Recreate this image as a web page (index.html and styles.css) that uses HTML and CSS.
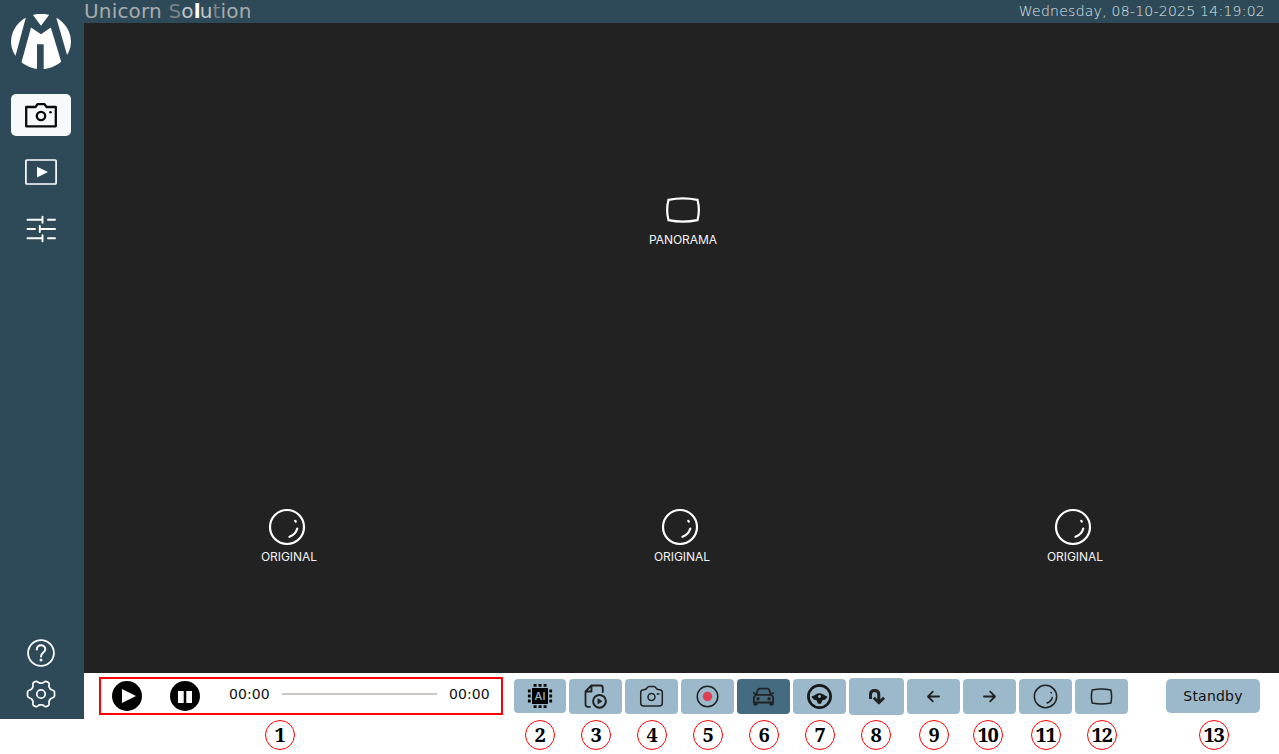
FILE: index.html
```html
<!DOCTYPE html>
<html lang="en">
<head>
<meta charset="utf-8">
<title>Unicorn Solution</title>
<link rel="stylesheet" href="styles.css">
</head>
<body>
<svg class="defs" width="0" height="0" aria-hidden="true">
  <symbol id="lens" viewBox="0 0 38 38">
    <circle cx="19" cy="19" r="17"/>
    <path d="M29.3 20.5Q27.6 26.6 21.5 28.8"/>
    <path d="M27.3 12.8l.5.8"/>
  </symbol>
  <symbol id="pano" viewBox="0 0 36 28">
    <path d="M3.500 3.800Q18 .8 32.500 3.800Q35.200 14 32.500 24.200Q18 27.200 3.500 24.200Q.8 14 3.500 3.800Z"/>
  </symbol>
</svg>
<div class="app">
  <aside class="sidebar">
    <svg class="logo" viewBox="11 14 60 55">
      <clipPath id="disc"><ellipse cx="41" cy="41.500" rx="30" ry="27.700"/></clipPath>
      <g clip-path="url(#disc)" fill="#fff">
        <path d="M31.500 13H50.500L41 25.700Z"/>
        <path d="M11 14H26.800L15.600 55.500L11 58Z"/>
        <path d="M71 14H55.200L67.200 55.500L71 58Z"/>
        <path d="M31 27.500L41 34.300L50.800 27.500L61.300 62V70H43.700V44.300H37V70H21.300V63Z"/>
      </g>
    </svg>
    <a class="nav active">
      <svg width="34" height="28" viewBox="0 0 34 28" fill="none" stroke="#0b0b0b" stroke-width="2.300" stroke-linejoin="round"><path d="M2.200 6H11.500L13.500 3.200H20.500L22.500 6H31.800V25.300H2.200Z"/><circle cx="17" cy="15" r="4.200"/><circle cx="26.500" cy="11.300" r="1.300" fill="#0b0b0b" stroke="none"/></svg>
    </a>
    <a class="nav">
      <svg width="34" height="28" viewBox="0 0 34 28" fill="none" stroke="#fff" stroke-width="1.700"><rect x="1.900" y="2" width="30.200" height="24" rx="1"/><path d="M13 8.800L24 14L13 19.500Z" fill="#fff" stroke="none"/></svg>
    </a>
    <a class="nav">
      <svg width="34" height="28" viewBox="0 0 34 28" fill="none" stroke="#fff" stroke-width="1.900" stroke-linecap="round"><path d="M3.500 4.700H18.500M24 4.700H31M18.500 1.700V7.700M3.500 14H11M16 14H31M15.800 11V17M3.500 23.300H18.500M24 23.300H31M18.500 20.300V26.300"/></svg>
    </a>
    <div class="sidebar-foot">
      <svg width="30" height="30" viewBox="0 0 30 30" fill="none" stroke="#fff" stroke-width="1.800" stroke-linecap="round"><circle cx="15" cy="15" r="12.900"/><path d="M10.800 11.500C10.800 5.700 19.300 5.900 19.300 11.300C19.300 14.600 15 14.600 15 18.500" stroke-width="2"/><circle cx="15" cy="22" r="1.500" fill="#fff" stroke="none"/></svg>
      <svg width="30" height="30" viewBox="0 0 30 30" fill="none" stroke="#fff" stroke-width="1.700" stroke-linejoin="round"><circle cx="15" cy="15" r="4.200"/><path d="M9.500 2.500C11 1.500 12.200 3.900 13.700 4.200H16.300C17.800 3.900 19 1.500 20.500 2.500L22.500 3.600C24 4.500 22.500 6.500 23.100 8L24.300 10C25.300 11.300 28.500 11 28.500 13V17C28.500 19 25.300 18.700 24.300 20L23.100 22C22.500 23.500 24 25.500 22.500 26.400L20.500 27.500C19 28.500 17.800 26.100 16.300 25.800H13.700C12.200 26.100 11 28.500 9.500 27.500L7.500 26.400C6 25.500 7.500 23.500 6.900 22L5.700 20C4.700 18.700 1.500 19 1.500 17V13C1.500 11 4.700 11.300 5.700 10L6.900 8C7.500 6.500 6 4.500 7.500 3.600Z"/></svg>
    </div>
  </aside>
  <main class="main">
    <header class="header">
      <h1 class="title">Unicorn <span class="s1">S</span><span class="s2">o</span><span class="s3">l</span><span class="s2">u</span><span class="s1">t</span>ion</h1>
      <time class="clock">Wednesday, 08-10-2025 14:19:02</time>
    </header>
    <section class="stage">
      <div class="view view-pano"><svg class="pano-icon"><use href="#pano"/></svg><span>PANORAMA</span></div>
      <div class="view"><svg class="lens-icon"><use href="#lens"/></svg><span>ORIGINAL</span></div>
      <div class="view"><svg class="lens-icon"><use href="#lens"/></svg><span>ORIGINAL</span></div>
      <div class="view"><svg class="lens-icon"><use href="#lens"/></svg><span>ORIGINAL</span></div>
    </section>
    <div class="toolbar">
      <div class="player">
        <svg class="play" viewBox="0 0 30 30"><circle cx="15" cy="15" r="15"/><path d="M10 8L24 15L10 22Z" fill="#fff"/></svg>
        <svg class="pause" viewBox="0 0 30 30"><circle cx="15" cy="15" r="15"/><path d="M8 10H13.700V22H8ZM16.300 10H22V22H16.300Z" fill="#fff"/></svg>
        <span class="time">00:00</span><span class="track"></span><span class="time">00:00</span>
      </div>
      <button class="btn btn-ai"><svg viewBox="0 0 26 26"><path d="M5 5H21V21H5Z"/><path d="M6.600 2.300H20M6.600 23.700H20" stroke="#050505" stroke-width="2.800" stroke-dasharray="3 2"/><path d="M2.300 6.600V20M23.700 6.600V20" stroke="#050505" stroke-width="2.800" stroke-dasharray="3 2"/><text x="13" y="17" text-anchor="middle" class="ai">AI</text></svg></button>
      <button class="btn"><svg class="line" viewBox="-.5 -.5 27 27"><path d="M7.500 23.300H5.500Q3 23.300 3 20.800V8L8.800 2H18Q20.300 2 20.300 4.500V8.500M9 2.500V8H3.500"/><circle cx="17" cy="17.800" r="6.400" stroke-width="2"/><path d="M15 14.500L20 17.800L15 21Z" fill="#222" stroke="none"/></svg></button>
      <button class="btn"><svg class="line thin" viewBox="-.5 -.5 27 27"><path d="M2.200 9Q2.200 6.200 5.200 6.200Q7.700 6.200 8.400 4.600Q9.200 3 11 3H15Q16.800 3 17.600 4.600Q18.300 6.200 20.800 6.200Q23.800 6.200 23.800 9V19.500Q23.800 22.500 20.800 22.500H5.200Q2.200 22.500 2.200 19.500Z"/><circle cx="13" cy="13.500" r="3.500"/><path d="M18.700 10.500H20.500"/></svg></button>
      <button class="btn"><svg class="line thin" viewBox="-.5 -.5 27 27"><circle cx="13" cy="13" r="10.300"/><circle cx="13" cy="13" r="4.700" fill="#e03e52" stroke="none"/></svg></button>
      <button class="btn selected"><svg class="line" viewBox="-.5 -.5 27 27"><path d="M5.500 11.300L7.500 6.200Q7.900 5.200 9 5.200H17Q18.100 5.200 18.500 6.200L20.500 11.300M5.500 11.300H20.500L22.600 13.500V19H3.400V13.500ZM3.700 19V21H6.300V19M19.700 19V21H22.300V19M3.300 9.500L5 10.500M22.700 9.500L21 10.500"/><circle cx="7.500" cy="15.200" r=".8"/><circle cx="18.500" cy="15.200" r=".8"/></svg></button>
      <button class="btn"><svg viewBox="-.5 -.5 27 27"><circle cx="13" cy="13" r="11.100" fill="none" stroke="#181818" stroke-width="2.700"/><path d="M5 13Q8 12 9.500 10.800Q13 8.600 16.500 10.800Q18 12 21 13Q19.500 16.500 16 16.800L14.500 20.300H11.500L10 16.800Q6.500 16.500 5 13Z" fill="#181818"/><circle cx="13" cy="13" r="1.400" fill="#9cb9cb"/></svg></button>
      <button class="btn btn-turn"><svg viewBox="-.5 -.5 27 27" fill="none" stroke="#222" stroke-width="3"><path d="M7 15.600V11Q7 7 11 7Q15.300 7 15.300 11V18.500"/><path d="M10.300 14.200L15.400 19.200L20.500 14.200"/></svg></button>
      <button class="btn"><svg class="line arrow" viewBox="-.5 -.5 27 27"><path d="M18.500 13H7.500M12.300 8.200L7.500 13L12.300 17.800"/></svg></button>
      <button class="btn"><svg class="line arrow" viewBox="-.5 -.5 27 27"><path d="M7.500 13H18.500M13.700 8.200L18.500 13L13.700 17.800"/></svg></button>
      <button class="btn"><svg class="mini-lens"><use href="#lens"/></svg></button>
      <button class="btn"><svg class="mini-pano"><use href="#pano"/></svg></button>
      <button class="standby">Standby</button>
    </div>
  </main>
  <ol class="legend">
    <li>1</li><li>2</li><li>3</li><li>4</li><li>5</li><li>6</li><li>7</li><li>8</li><li class="nine">9</li><li class="ten">10</li><li class="eleven">11</li><li>12</li><li class="last">13</li>
  </ol>
</div>
</body>
</html>
```
FILE: styles.css
```css
* { box-sizing: border-box; }
body { margin: 0; background: #fff; overflow: hidden; }
button { border: 0; padding: 0; margin: 0; }
svg { display: block; flex: none; }
.defs { display: none; }
.app { width: 1279px; height: 754px; display: grid; grid-template: 719px 35px / 84px 1195px; }

.sidebar { background: #2e4a59; padding: 14px 0 10px 11px; display: flex; flex-direction: column; }
.logo { width: 60px; height: 55px; }
.nav { width: 60px; height: 42px; margin-top: 15px; border-radius: 5px; display: flex; align-items: center; justify-content: center; }
.nav.active { background: #f8f9fb; margin-top: 25px; }
.sidebar-foot { margin-top: auto; width: 60px; display: flex; flex-direction: column; align-items: center; gap: 11px; }

.main { display: grid; grid-template-rows: 23px 650px 46px; }
.header { background: #2e4a59; display: flex; justify-content: space-between; align-items: flex-start; padding-right: 14px; font-family: "DejaVu Sans", sans-serif; }
.title { margin: 0; font-size: 20px; line-height: 23px; font-weight: 400; letter-spacing: .18px; color: #a9abac; }
.s1 { color: #7f8285; }
.s2 { color: #c3c6c8; }
.s3 { color: #fff; font-weight: 700; letter-spacing: -1px; }
.clock { font-family: "DejaVu Sans Light", "DejaVu Sans", sans-serif; font-weight: 200; font-size: 14px; line-height: 22px; letter-spacing: .25px; color: #dfe5e8; }

.stage { background: #222; padding: 0 9.500px 0 6.500px; display: grid; grid-template: 485px 1fr / repeat(3, 393px); }
.view { display: flex; flex-direction: column; align-items: center; color: #f4f4f4; font: 400 12px/16px Inter, sans-serif; letter-spacing: -.05px; }
.view span { padding-left: 4px; }
.view-pano { grid-column: 1 / -1; padding: 173px 0 0 6px; gap: 8px; }
.view-pano span { padding-left: 0; }
.pano-icon { width: 36px; height: 28px; fill: none; stroke: #fff; stroke-width: 2.200; }
.lens-icon { width: 38px; height: 38px; margin-bottom: 3px; fill: none; stroke: #fff; stroke-width: 2.200; stroke-linecap: round; }

.toolbar { background: #fff; display: flex; align-items: flex-start; padding: 4px 0 0 15px; gap: 3px; }
.player { width: 404px; height: 38px; margin-right: 8px; border: 2px solid #f00; display: flex; align-items: center; padding: 0 11px; font: 14px/18px "DejaVu Sans", sans-serif; letter-spacing: .1px; color: #111; }
.play, .pause { width: 30px; height: 30px; }
.play { margin-right: 28px; }
.time { width: 42px; margin-top: -4px; padding-left: 1px; }
.pause { margin-right: 28px; }
.track { width: 155px; height: 2px; margin: -4px 11px 0 12px; background: #cdc6c3; }
.btn { width: 53px; height: 35px; margin-top: 2px; border-radius: 4px; background: #9cb9cb; display: flex; align-items: center; justify-content: center; flex: none; }
.btn svg { width: 27px; height: 27px; }
.btn-ai { width: 52px; height: 34px; }
.btn-ai svg { width: 26px; height: 26px; }
.btn-turn { width: 55px; height: 37px; margin-top: 1px; }
.selected { background: #446b7f; }
.ai { font: 500 11px Inter, sans-serif; fill: #9cb9cb; }
.line { fill: none; stroke: #222; stroke-width: 1.800; stroke-linecap: round; stroke-linejoin: round; }
.thin { stroke-width: 1.500; }
.btn .mini-lens { width: 25px; height: 25px; fill: none; stroke: #222; stroke-width: 2.300; stroke-linecap: round; }
.btn .mini-pano { width: 23px; height: 19px; fill: none; stroke: #222; stroke-width: 2.400; }
.standby { width: 94px; height: 34px; margin: 2px 0 0 35px; border-radius: 5px; background: #9cb9cb; font: 14px "DejaVu Sans", sans-serif; letter-spacing: .2px; color: #111; }

.legend { grid-column: 1 / -1; margin: 1px 0 0; padding: 0 0 0 265px; list-style: none; display: flex; gap: 26px; font: 700 20px/28px "Noto Serif", "DejaVu Serif Condensed", "DejaVu Serif", serif; letter-spacing: -1.200px; color: #000; }
.legend li { flex: none; width: 30px; height: 30px; padding-right: 1px; border: 1px solid #f00; border-radius: 50%; display: flex; justify-content: center; }
.legend li:first-child { margin-right: 204px; }
.legend .nine { margin-left: 2px; }
.legend .ten { margin-left: -2px; }
.legend .eleven { margin-left: 2px; }
.legend .last { margin-left: 56px; }
```
